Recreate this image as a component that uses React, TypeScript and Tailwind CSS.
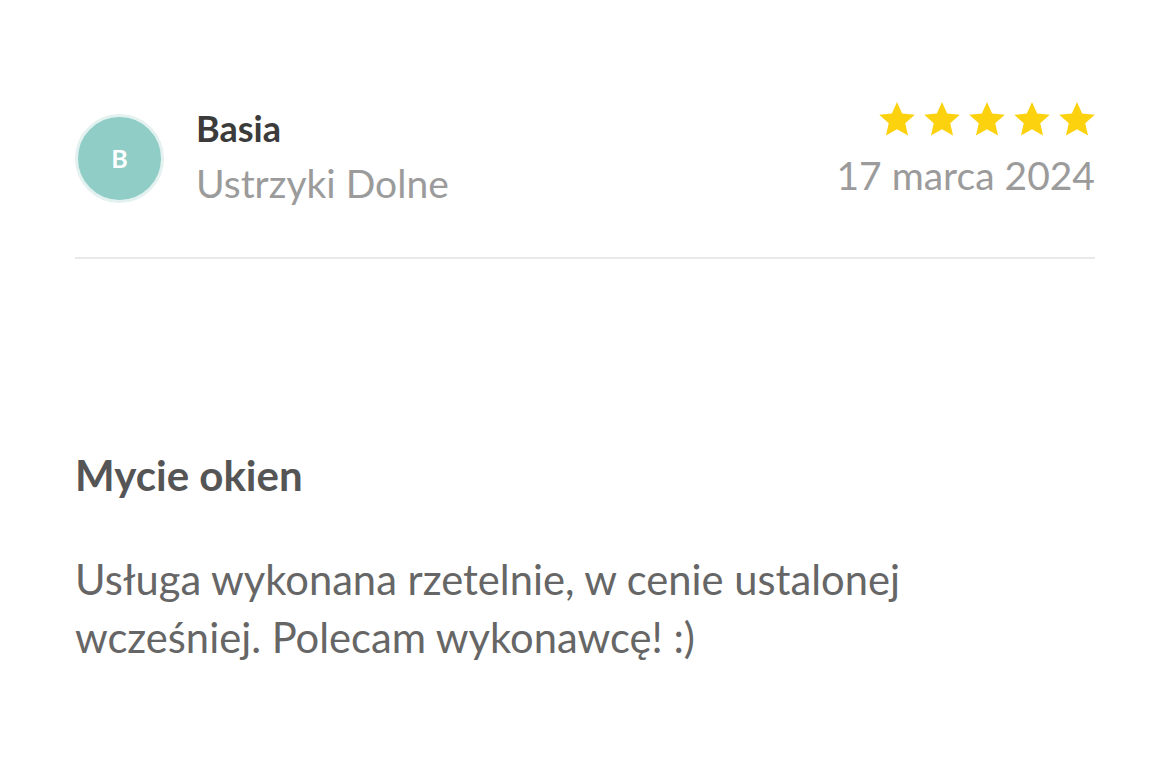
const Star = () => (
  <svg viewBox="0 0 24 24" className="w-[40px] h-[40px]" fill="#fcd20f">
    <path d="M12 1.8l3.09 6.97 7.58.72-5.72 5.03 1.67 7.43L12 18.1l-6.62 3.85 1.67-7.43L1.33 9.49l7.58-.72z" />
  </svg>
)

export default function App() {
  return (
    <div className="min-h-screen bg-white font-['Lato',sans-serif]">
      <div className="px-[75px] pt-[99px]">
        <div className="flex justify-between items-start pb-[51px] border-b-2 border-[#e9e9e9]">
          <div className="flex items-start">
            <div className="mt-[15px] w-[89px] h-[89px] rounded-full bg-[#8fcdc6] border-[3px] border-[#e3f2f0] flex items-center justify-center text-white font-bold text-[25px]">
              B
            </div>
            <div className="ml-[32px] flex flex-col">
              <span className="text-[36px] font-bold text-[#3b3b3b] leading-[40px] mt-[9px]">Basia</span>
              <span className="text-[39px] text-[#9b9b9b] leading-[46px] mt-[12px]">Ustrzyki Dolne</span>
            </div>
          </div>
          <div className="flex flex-col items-end">
            <div className="flex gap-[5px] mr-[-2px]">
              <Star /><Star /><Star /><Star /><Star />
            </div>
            <span className="text-[39px] text-[#9b9b9b] leading-[44px] mt-[14px]">17 marca 2024</span>
          </div>
        </div>

        <h2 className="mt-[191px] text-[42px] font-bold text-[#555555] leading-[50px]">Mycie okien</h2>
        <p className="mt-[50px] text-[41.7px] text-[#666666] leading-[58px] max-w-[860px]">
          Usługa wykonana rzetelnie, w cenie ustalonej wcześniej. Polecam wykonawcę! :)
        </p>
      </div>
    </div>
  )
}
